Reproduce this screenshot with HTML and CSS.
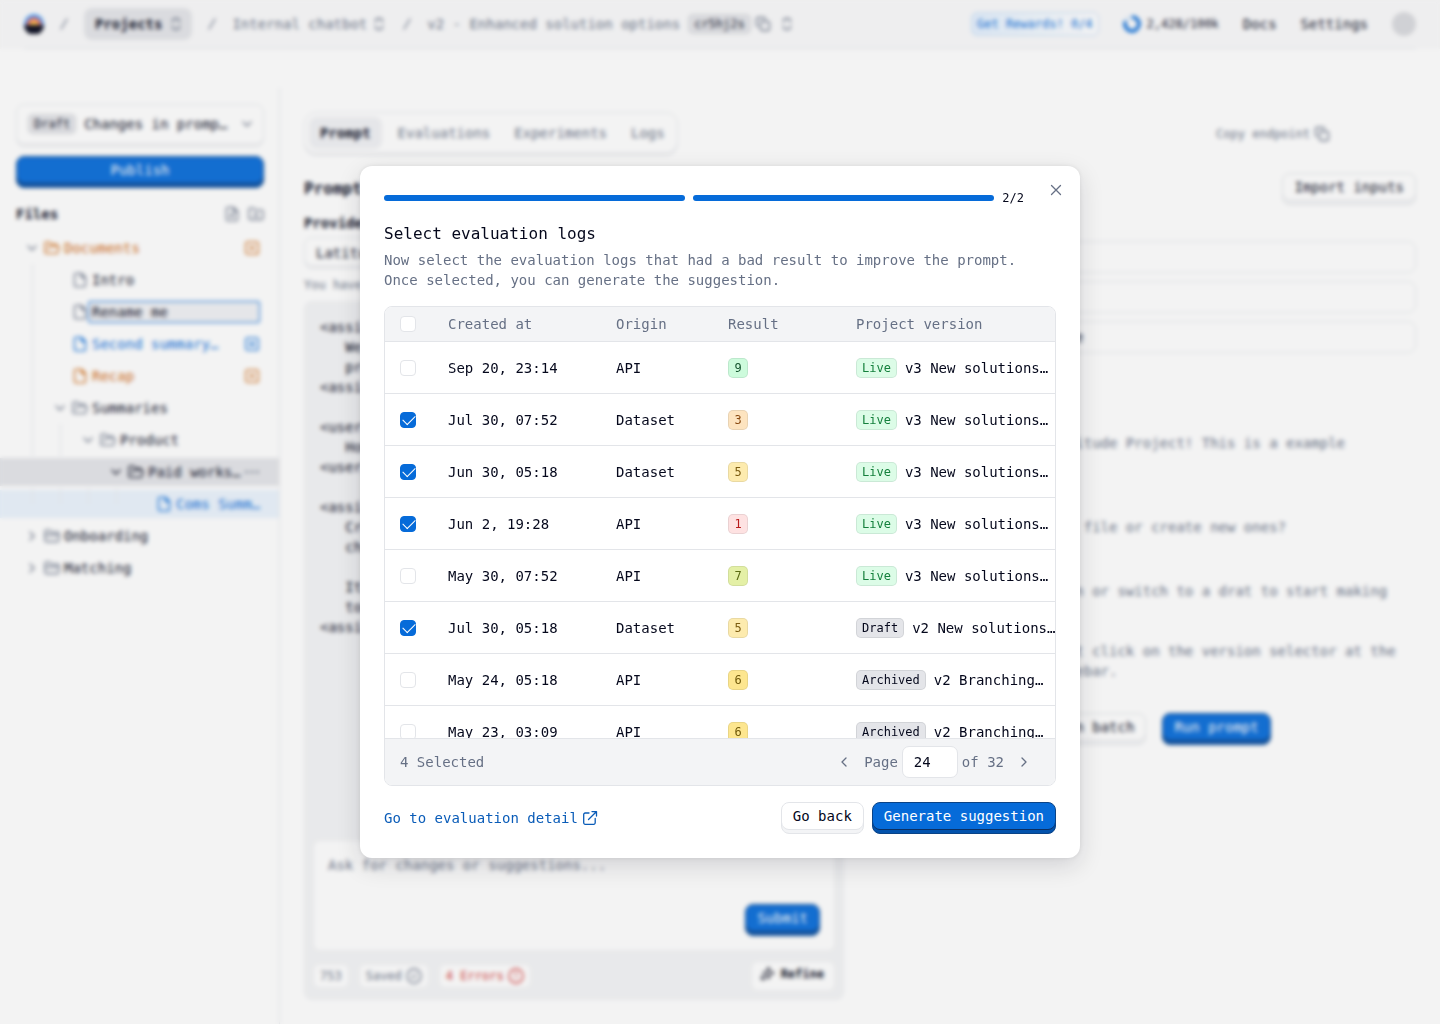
FILE: index.html
```html
<!DOCTYPE html>
<html lang="en">
<head>
    <meta charset="UTF-8">
    <meta name="viewport" content="width=device-width, initial-scale=1.0">
    <title>Select evaluation logs</title>
    <link rel="stylesheet" href="styles.css">
</head>
<body>
    <svg class="sprite" aria-hidden="true">
        <symbol id="updown" viewBox="0 0 16 16"><path d="M4.5 6V5a3.5 2.5 0 0 1 7 0v1M4.5 10v1a3.5 2.5 0 0 0 7 0v-1"/></symbol>
        <symbol id="slash" viewBox="0 0 16 16"><path d="M11 3 5 13"/></symbol>
        <symbol id="copy" viewBox="0 0 16 16"><rect x="5.5" y="5.5" width="9" height="9" rx="2"/><path d="M3 10.5A1.5 1.5 0 0 1 1.5 9V3A1.5 1.5 0 0 1 3 1.5h6A1.5 1.5 0 0 1 10.5 3"/></symbol>
        <symbol id="down" viewBox="0 0 16 16"><path d="m4 6 4 4 4-4"/></symbol>
        <symbol id="left" viewBox="0 0 16 16"><path d="m10 4-4 4 4 4"/></symbol>
        <symbol id="right" viewBox="0 0 16 16"><path d="m6 4 4 4-4 4"/></symbol>
        <symbol id="file" viewBox="0 0 16 16"><path d="M9.5 1.3H4a1.5 1.5 0 0 0-1.500 1.500v10.400A1.500 1.500 0 0 0 4 14.700h8a1.500 1.500 0 0 0 1.500-1.500V5.300zM9.300 1.500v4h4"/></symbol>
        <symbol id="file-plus" viewBox="0 0 16 16"><path d="M9.5 1.3H4a1.5 1.5 0 0 0-1.500 1.500v10.400A1.500 1.500 0 0 0 4 14.700h8a1.500 1.500 0 0 0 1.500-1.500V5.300zM9.300 1.500v4h4M8 7.500v4M6 9.500h4"/></symbol>
        <symbol id="folder" viewBox="0 0 16 16"><path d="M1 12V3.500A1.300 1.300 0 0 1 2.300 2.200H5.500L7 4.200h6.700A1.300 1.300 0 0 1 15 5.500V12a1.500 1.500 0 0 1-1.500 1.500h-11A1.500 1.500 0 0 1 1 12zM1 7h14"/></symbol>
        <symbol id="folder-plus" viewBox="0 0 16 16"><path d="M1 12V3.500A1.300 1.300 0 0 1 2.300 2.200H5.500L7 4.200h6.700A1.300 1.300 0 0 1 15 5.500V12a1.500 1.500 0 0 1-1.500 1.500h-11A1.500 1.500 0 0 1 1 12zM8 6.800v4M6 8.800h4"/></symbol>
        <symbol id="folder-open" viewBox="0 0 16 16"><path d="m4 9 1-2a1.300 1.300 0 0 1 1.200-.7h7.600a1.200 1.200 0 0 1 1.200 1.600l-1.200 4.500a1.300 1.300 0 0 1-1.300 1H2.500A1.400 1.400 0 0 1 1 12V3.500A1.300 1.300 0 0 1 2.300 2.200H5.500L7 4.200h5a1.300 1.300 0 0 1 1.300 1.300v.8"/></symbol>
        <symbol id="modified" viewBox="0 0 16 16"><rect x="1.800" y="1.800" width="12.400" height="12.400" rx="2"/><circle cx="8" cy="8" r="1.500"/></symbol>
        <symbol id="added" viewBox="0 0 16 16"><rect x="1.800" y="1.800" width="12.400" height="12.400" rx="2"/><path d="M8 5.300v5.400M5.300 8h5.400"/></symbol>
        <symbol id="dots" viewBox="0 0 16 16"><path d="M2.500 8h.1M8 8h.1M13.400 8h.1" stroke-width="2.500"/></symbol>
        <symbol id="check-circle" viewBox="0 0 16 16"><circle cx="8" cy="8" r="7"/><path d="m5.700 8 1.600 1.600 3-3"/></symbol>
        <symbol id="alert" viewBox="0 0 16 16"><circle cx="8" cy="8" r="7"/><path d="M8 4.800V8M8 10.800v.1"/></symbol>
        <symbol id="sparkles" viewBox="0 0 16 16"><path d="M9.500 1.500 11 5.500 15 7 11 8.500 9.500 12.500 8 8.500 4 7 8 5.500zM4 10v4M2 12h4"/></symbol>
        <symbol id="close" viewBox="0 0 16 16"><path d="m3.500 3.500 9 9M12.500 3.500l-9 9"/></symbol>
        <symbol id="external" viewBox="0 0 16 16"><path d="M13.200 8.500v4.300a1.500 1.500 0 0 1-1.500 1.500H3.200a1.500 1.500 0 0 1-1.500-1.500V4.500A1.500 1.500 0 0 1 3.200 3H7M10 1.600h4.500v4.500M14.300 1.800 6.500 9.500"/></symbol>
    </svg>

    <div class="app">
        <header class="topbar">
            <nav class="crumbs" aria-label="Breadcrumb">
                <svg class="logo" viewBox="0 0 20 20">
                    <circle cx="10" cy="10" r="10" fill="#4a9ff5"/>
                    <path d="M2.500 11a7.500 7.500 0 0 1 15 0z" fill="#f0525f"/>
                    <path d="M5 11a5 5 0 0 1 10 0z" fill="#ffc04a"/>
                    <path d="M0 11h20A10 10 0 0 1 0 11z" fill="#05081c"/>
                </svg>
                <svg class="icon muted"><use href="#slash"/></svg>
                <button class="crumb crumb-active">Projects <svg class="icon muted"><use href="#updown"/></svg></button>
                <svg class="icon muted"><use href="#slash"/></svg>
                <button class="crumb">Internal chatbot <svg class="icon"><use href="#updown"/></svg></button>
                <svg class="icon muted"><use href="#slash"/></svg>
                <button class="crumb">v2 - Enhanced solution options
                    <span class="badge badge-gray crumb-badge">cr5hj2s</span>
                    <svg class="icon"><use href="#copy"/></svg>
                    <svg class="icon crumb-more"><use href="#updown"/></svg>
                </button>
            </nav>
            <div class="topbar-right">
                <button class="rewards">Get Rewards! 0/4</button>
                <span class="usage">
                    <svg class="donut" viewBox="0 0 18 18"><circle cx="9" cy="9" r="7"/><path d="M9 2a7 7 0 1 1-6.500 4.400"/></svg>
                    2,428/100k
                </span>
                <a class="toplink" href="#">Docs</a>
                <a class="toplink" href="#">Settings</a>
                <span class="avatar"></span>
            </div>
        </header>

        <div class="body">
            <aside class="sidebar">
                <button class="version">
                    <span class="badge badge-gray">Draft</span>
                    <span class="version-name">Changes in promp…</span>
                    <svg class="icon muted"><use href="#down"/></svg>
                </button>
                <button class="btn btn-primary">Publish</button>
                <div class="files-head">
                    <h2 class="files-title">Files</h2>
                    <svg class="icon muted"><use href="#file-plus"/></svg>
                    <svg class="icon muted"><use href="#folder-plus"/></svg>
                </div>
                <ul class="tree">
                    <li class="node orange"><svg class="icon muted"><use href="#down"/></svg><svg class="icon"><use href="#folder-open"/></svg><span class="node-name">Documents</span><svg class="icon"><use href="#modified"/></svg></li>
                    <li class="node"><i class="indent"></i><i class="blank"></i><svg class="icon muted"><use href="#file"/></svg><span class="node-name">Intro</span></li>
                    <li class="node"><i class="indent"></i><i class="blank"></i><svg class="icon muted"><use href="#file"/></svg><input class="rename" type="text" value="Rename me" aria-label="File name"></li>
                    <li class="node blue"><i class="indent"></i><i class="blank"></i><svg class="icon"><use href="#file"/></svg><span class="node-name">Second summary…</span><svg class="icon"><use href="#added"/></svg></li>
                    <li class="node orange"><i class="indent"></i><i class="blank"></i><svg class="icon"><use href="#file"/></svg><span class="node-name">Recap</span><svg class="icon"><use href="#modified"/></svg></li>
                    <li class="node"><i class="indent"></i><svg class="icon muted"><use href="#down"/></svg><svg class="icon muted"><use href="#folder-open"/></svg><span class="node-name">Summaries</span></li>
                    <li class="node"><i class="indent"></i><i class="indent"></i><svg class="icon muted"><use href="#down"/></svg><svg class="icon muted"><use href="#folder-open"/></svg><span class="node-name">Product</span></li>
                    <li class="node node-hover"><i class="indent"></i><i class="indent"></i><i class="indent"></i><svg class="icon"><use href="#down"/></svg><svg class="icon"><use href="#folder-open"/></svg><span class="node-name">Paid works…</span><svg class="icon muted"><use href="#dots"/></svg></li>
                    <li class="node node-selected blue"><i class="indent"></i><i class="indent"></i><i class="indent"></i><i class="indent"></i><i class="blank"></i><svg class="icon"><use href="#file"/></svg><span class="node-name">Coms Summ…</span></li>
                    <li class="node"><svg class="icon muted"><use href="#right"/></svg><svg class="icon muted"><use href="#folder"/></svg><span class="node-name">Onboarding</span></li>
                    <li class="node"><svg class="icon muted"><use href="#right"/></svg><svg class="icon muted"><use href="#folder"/></svg><span class="node-name">Matching</span></li>
                </ul>
            </aside>

            <main class="main">
                <div class="main-head">
                    <div class="tabs">
                        <button class="tab tab-active">Prompt</button>
                        <button class="tab">Evaluations</button>
                        <button class="tab">Experiments</button>
                        <button class="tab">Logs</button>
                    </div>
                    <button class="copy-endpoint">Copy endpoint <svg class="icon"><use href="#copy"/></svg></button>
                </div>
                <div class="columns">
                    <section class="column">
                        <div class="column-head"><h1 class="heading">Prompt</h1></div>
                        <label class="label" for="provider">Provider</label>
                        <select class="select" id="provider"><option>Latitude</option></select>
                        <p class="help">You have 9</p>
                        <div class="editor">
<pre class="code">&lt;assistant&gt;
   We read
   prompts.
&lt;assistant/&gt;

&lt;user&gt;
   How?
&lt;user/&gt;

&lt;assistant&gt;
   Create
   chats.

   It has
   tools.
&lt;assistant/&gt;</pre>
                            <div class="ask">
                                <textarea class="ask-input" placeholder="Ask for changes or suggestions..." aria-label="Ask for changes"></textarea>
                                <button class="btn btn-primary ask-submit">Submit</button>
                            </div>
                            <div class="editor-foot">
                                <span class="chip">753</span>
                                <span class="chip">Saved <svg class="icon"><use href="#check-circle"/></svg></span>
                                <span class="chip chip-red">4 Errors <svg class="icon"><use href="#alert"/></svg></span>
                                <button class="refine"><svg class="icon"><use href="#sparkles"/></svg> Refine</button>
                            </div>
                        </div>
                    </section>
                    <section class="column">
                        <div class="column-head column-head-end">
                            <button class="btn btn-outline">Import inputs</button>
                        </div>
                        <div class="fields">
                            <input class="field-input" type="text" aria-label="Name">
                            <input class="field-input" type="text" aria-label="Question">
                            <input class="field-input" type="text" aria-label="Company" value="Latitude">
                        </div>
                        <div class="messages">
                            <p class="message message-tall">Latitude Project! This is a example</p>
                            <p class="message">any file or create new ones?</p>
                            <div class="message">
                                <p class="message-tall">plan or switch to a drat to start making</p>
                                <p>Just click on the version selector at the<br>sidebar.</p>
                            </div>
                        </div>
                        <div class="run-actions">
                            <button class="btn btn-outline">Run in batch</button>
                            <button class="btn btn-primary">Run prompt</button>
                        </div>
                    </section>
                </div>
            </main>
        </div>
    </div>

    <div class="overlay">
        <div class="dialog" role="dialog" aria-modal="true" aria-labelledby="dialog-title">
            <button class="close" aria-label="Close"><svg class="icon"><use href="#close"/></svg></button>
            <div class="steps">
                <span class="step"></span>
                <span class="step"></span>
                <span class="step-count">2/2</span>
            </div>
            <div class="intro">
                <h2 class="title" id="dialog-title">Select evaluation logs</h2>
                <p class="description">Now select the evaluation logs that had a bad result to improve the prompt. Once selected, you can generate the suggestion.</p>
            </div>

            <div class="logs">
                <div class="logs-scroll">
                    <table class="table">
                        <colgroup>
                            <col class="col-check"><col class="col-date"><col class="col-origin"><col class="col-result"><col>
                        </colgroup>
                        <thead>
                            <tr>
                                <th><input class="check" type="checkbox" aria-label="Select all"></th>
                                <th>Created at</th>
                                <th>Origin</th>
                                <th>Result</th>
                                <th>Project version</th>
                            </tr>
                        </thead>
                        <tbody>
                            <tr>
                                <td><input class="check" type="checkbox" aria-label="Select log"></td>
                                <td>Sep 20, 23:14</td>
                                <td>API</td>
                                <td><span class="badge score-9">9</span></td>
                                <td><span class="project"><span class="badge badge-green">Live</span> v3 New solutions…</span></td>
                            </tr>
                            <tr>
                                <td><input class="check" type="checkbox" aria-label="Select log" checked></td>
                                <td>Jul 30, 07:52</td>
                                <td>Dataset</td>
                                <td><span class="badge score-3">3</span></td>
                                <td><span class="project"><span class="badge badge-green">Live</span> v3 New solutions…</span></td>
                            </tr>
                            <tr>
                                <td><input class="check" type="checkbox" aria-label="Select log" checked></td>
                                <td>Jun 30, 05:18</td>
                                <td>Dataset</td>
                                <td><span class="badge score-5">5</span></td>
                                <td><span class="project"><span class="badge badge-green">Live</span> v3 New solutions…</span></td>
                            </tr>
                            <tr>
                                <td><input class="check" type="checkbox" aria-label="Select log" checked></td>
                                <td>Jun 2, 19:28</td>
                                <td>API</td>
                                <td><span class="badge score-1">1</span></td>
                                <td><span class="project"><span class="badge badge-green">Live</span> v3 New solutions…</span></td>
                            </tr>
                            <tr>
                                <td><input class="check" type="checkbox" aria-label="Select log"></td>
                                <td>May 30, 07:52</td>
                                <td>API</td>
                                <td><span class="badge score-7">7</span></td>
                                <td><span class="project"><span class="badge badge-green">Live</span> v3 New solutions…</span></td>
                            </tr>
                            <tr>
                                <td><input class="check" type="checkbox" aria-label="Select log" checked></td>
                                <td>Jul 30, 05:18</td>
                                <td>Dataset</td>
                                <td><span class="badge score-5">5</span></td>
                                <td><span class="project"><span class="badge badge-gray">Draft</span> v2 New solutions…</span></td>
                            </tr>
                            <tr>
                                <td><input class="check" type="checkbox" aria-label="Select log"></td>
                                <td>May 24, 05:18</td>
                                <td>API</td>
                                <td><span class="badge score-6">6</span></td>
                                <td><span class="project"><span class="badge badge-gray">Archived</span> v2 Branching…</span></td>
                            </tr>
                            <tr>
                                <td><input class="check" type="checkbox" aria-label="Select log"></td>
                                <td>May 23, 03:09</td>
                                <td>API</td>
                                <td><span class="badge score-6">6</span></td>
                                <td><span class="project"><span class="badge badge-gray">Archived</span> v2 Branching…</span></td>
                            </tr>
                        </tbody>
                    </table>
                </div>
                <div class="logs-foot">
                    <span>4 Selected</span>
                    <div class="pager">
                        <button class="page-btn" aria-label="Previous page"><svg class="icon"><use href="#left"/></svg></button>
                        <div class="page-now">
                            <label for="page">Page</label>
                            <input class="page-input" id="page" type="text" value="24">
                            <span>of 32</span>
                        </div>
                        <button class="page-btn" aria-label="Next page"><svg class="icon"><use href="#right"/></svg></button>
                    </div>
                </div>
            </div>

            <div class="actions">
                <a class="detail-link" href="#">Go to evaluation detail <svg class="icon"><use href="#external"/></svg></a>
                <button class="btn btn-outline">Go back</button>
                <button class="btn btn-primary">Generate suggestion</button>
            </div>
        </div>
    </div>
</body>
</html>
```

FILE: styles.css
```css
* {
    box-sizing: border-box;
}
body {
    margin: 0;
    background: #fff;
    color: #05081c;
    font: 14px/20px "DejaVu Sans Mono", monospace;
}
h1, h2, p, ul, pre {
    margin: 0;
    padding: 0;
}
button, input, select, textarea {
    font: inherit;
    color: inherit;
}
button {
    display: inline-flex;
    align-items: center;
    padding: 0;
    border: 0;
    background: none;
    white-space: nowrap;
    cursor: pointer;
}
a {
    color: inherit;
    text-decoration: none;
}
.sprite {
    display: none;
}
.icon {
    flex: none;
    width: 16px;
    height: 16px;
    fill: none;
    stroke: currentColor;
    stroke-width: 1.3;
    stroke-linecap: round;
    stroke-linejoin: round;
}
.icon.muted {
    color: #667085;
}

/* badges */
.badge {
    display: inline-flex;
    flex: none;
    align-items: center;
    justify-content: center;
    min-width: 20px;
    height: 20px;
    padding: 0 5px;
    border: 1px solid rgba(5, 8, 28, .08);
    border-radius: 5px;
    font-size: 12px;
    line-height: 16px;
}
.badge-gray { background: #e4e5e9; }
.badge-green { background: #dcfce7; color: #15803d; }
.score-9 { background: #cdfbdc; color: #14532d; }
.score-7 { background: #e4f0a6; color: #5a6b12; }
.score-6 { background: #fde68f; color: #715a0a; }
.score-5 { background: #fdebae; color: #7c5c10; }
.score-3 { background: #fde4c0; color: #8a4b12; }
.score-1 { background: #fee2e2; color: #b91c1c; }

/* buttons */
.btn {
    justify-content: center;
    height: 32px;
    padding: 0 11px 4px;
    border: 1px solid #e3e5e9;
    border-radius: 8px;
}
.btn-outline {
    background: #fff;
    box-shadow: inset 0 -3px 0 #f3f4f6, inset 0 -4px 0 #e3e5e9;
}
.btn-primary {
    border-color: #0a4387;
    background: #066bd9;
    box-shadow: inset 0 -3px 0 #0352ac, inset 0 -4px 0 #0a2f63;
    color: #fff;
}

/* top bar */
.app {
    display: flex;
    flex-direction: column;
    min-height: 100vh;
}
.topbar {
    display: flex;
    align-items: center;
    justify-content: space-between;
    height: 49px;
    padding: 0 24px 1px;
    background: linear-gradient(#e9ebee, #e9ebee) 50% 100% / calc(100% - 48px) 1px no-repeat #fafafb;
}
.crumbs {
    display: flex;
    align-items: center;
    gap: 12px;
    color: #667085;
}
.logo {
    width: 20px;
    height: 20px;
}
.crumb {
    gap: 4px;
}
.crumb-active {
    height: 32px;
    padding: 0 8px 0 11px;
    gap: 6px;
    border-radius: 8px;
    background: #e4e5e9;
    color: #05081c;
    font-weight: bold;
}
.crumb-badge {
    margin-left: 4px;
    color: #05081c;
}
.crumb-more {
    margin-left: 4px;
}
.topbar-right {
    display: flex;
    align-items: center;
    gap: 24px;
}
.rewards {
    height: 24px;
    padding: 0 5px;
    border: 1px solid #c3dcf6;
    border-radius: 6px;
    background: linear-gradient(90deg, #e3f0fe, #fff);
    color: #066bd9;
    font-size: 12px;
}
.usage {
    display: flex;
    align-items: center;
    gap: 6px;
    font-size: 12px;
}
.donut {
    width: 18px;
    height: 18px;
    fill: none;
    stroke: #d9e8f8;
    stroke-width: 3.5;
}
.donut path {
    stroke: #066bd9;
}
.avatar {
    width: 24px;
    height: 24px;
    border-radius: 50%;
    background: #d9dade;
}

/* sidebar */
.body {
    display: flex;
    flex: 1;
    padding-top: 39px;
}
.sidebar {
    display: flex;
    flex: none;
    flex-direction: column;
    width: 280px;
    padding: 16px 0;
    border-right: 1px solid #e9ebee;
}
.version {
    gap: 8px;
    height: 43px;
    margin: 0 15px 9px 16px;
    padding: 0 8px 4px 11px;
    border: 1px solid #e9ebee;
    border-radius: 8px;
    box-shadow: inset 0 -3px 0 #f0f1f4;
}
.version-name {
    flex: 1;
    text-align: left;
}
.sidebar .btn {
    margin: 0 15px 0 16px;
}
.files-head {
    display: flex;
    align-items: center;
    gap: 8px;
    margin: 16px 15px 8px 16px;
}
.files-title {
    flex: 1;
    font-size: 14px;
}
.tree {
    display: flex;
    flex-direction: column;
    gap: 4px;
    padding-top: 2px;
    list-style: none;
}
.node {
    display: flex;
    align-items: center;
    gap: 4px;
    height: 28px;
    padding: 0 19px 0 24px;
}
.node-name {
    flex: 1;
    min-width: 0;
    white-space: nowrap;
}
.indent {
    flex: none;
    align-self: stretch;
    width: 24px;
    margin: -2px 0;
    background: linear-gradient(#e9ebee, #e9ebee) 8px 0 / 1px 100% no-repeat;
}
.blank {
    flex: none;
    width: 16px;
}
.orange { color: #d0670f; }
.blue { color: #066bd9; }
.node-hover { background: #e4e5e9; }
.node-selected { background: #eaf3fd; }
.node-hover .indent { background: none; }
.node-selected .indent { background-size: 1px 50%; }
.rename {
    flex: 1;
    min-width: 0;
    height: 22px;
    margin-left: -4px;
    padding: 0 3px;
    border: 1px solid #066bd9;
    border-radius: 2px;
    background: #f0f1f4;
}

/* main area */
.main {
    display: flex;
    flex: 1;
    flex-direction: column;
    gap: 17px;
    min-width: 0;
    padding: 24px;
}
.main-head {
    display: flex;
    align-items: center;
    justify-content: space-between;
}
.tabs {
    display: flex;
    height: 44px;
    padding: 4px 0 6px 4px;
    border: 1px solid #e9ebee;
    border-radius: 12px;
    box-shadow: inset 0 -3px 0 #f0f1f4;
}
.tab {
    padding: 0 12px;
    border-radius: 8px;
    color: #667085;
}
.tab-active {
    margin-right: 4px;
    padding: 0 11px;
    background: #f0f1f4;
    color: #05081c;
    font-weight: bold;
}
.copy-endpoint {
    gap: 4px;
    margin-right: 86px;
    color: #667085;
    font-size: 12px;
}
.columns {
    display: flex;
    flex: 1;
    gap: 32px;
}
.column {
    display: flex;
    flex: 1;
    flex-direction: column;
    min-width: 0;
}
.column-head {
    display: flex;
    align-items: center;
    height: 32px;
    margin-bottom: 8px;
}
.column-head-end {
    justify-content: flex-end;
}
.heading {
    font-size: 16px;
    line-height: 24px;
}
.label {
    font-weight: bold;
}
.select {
    align-self: flex-start;
    width: 160px;
    height: 32px;
    margin: 4px 0 8px;
    padding: 0 7px;
    border: 1px solid #e9ebee;
    border-radius: 8px;
    background: #fff;
    box-shadow: inset 0 -3px 0 #f0f1f4;
}
.help {
    margin-bottom: 8px;
    color: #667085;
    font-size: 12px;
    line-height: 16px;
}
.editor {
    display: flex;
    flex: 1;
    flex-direction: column;
    padding: 16px 10px 10px;
    border-radius: 8px;
    background: #f3f4f6;
}
.code {
    flex: 1;
    padding-left: 6px;
    font: inherit;
}
.ask {
    display: flex;
    flex-direction: column;
    height: 109px;
    padding: 14px;
    border-radius: 6px;
    background: #fff;
}
.ask-input {
    flex: 1;
    padding: 0;
    border: 0;
    resize: none;
    background: none;
}
.ask-input::placeholder {
    color: #667085;
}
.ask-submit {
    align-self: flex-end;
}
.editor-foot {
    display: flex;
    align-items: center;
    gap: 12px;
    height: 28px;
    margin-top: 12px;
    font-size: 12px;
}
.chip {
    display: flex;
    align-items: center;
    gap: 4px;
    height: 22px;
    padding: 0 6px;
    border-radius: 5px;
    background: #fff;
    color: #667085;
}
.chip-red {
    color: #cf2f2f;
}
.refine {
    gap: 6px;
    height: 28px;
    margin-left: auto;
    padding: 0 10px 4px 7px;
    border-radius: 6px;
    background: #fff;
    font-weight: bold;
}

.fields {
    display: flex;
    flex-direction: column;
    gap: 8px;
    margin: 28px 0 0 128px;
}
.field-input {
    height: 32px;
    padding: 0 11px;
    border: 1px solid #e9ebee;
    border-radius: 8px;
}
.messages {
    display: flex;
    flex-direction: column;
    gap: 44px;
    margin-top: 80px;
    padding-left: 174px;
    color: #667085;
    white-space: nowrap;
}
.message-tall {
    min-height: 40px;
}
.message p + p {
    margin-top: 20px;
}
.run-actions {
    display: flex;
    justify-content: center;
    gap: 16px;
    margin-top: 32px;
}

/* dialog */
.overlay {
    position: fixed;
    inset: 0;
    display: flex;
    align-items: center;
    justify-content: center;
    background: rgba(135, 135, 135, .1);
    backdrop-filter: blur(2px);
}
.dialog {
    position: relative;
    display: flex;
    flex-direction: column;
    gap: 16px;
    width: 100%;
    max-width: 720px;
    padding: 24px;
    border-radius: 12px;
    background: #fff;
    box-shadow: 0 8px 24px rgba(5, 8, 28, .14), 0 0 4px rgba(5, 8, 28, .08);
}
.close {
    position: absolute;
    top: 16px;
    right: 16px;
    color: #667085;
}
.steps {
    display: flex;
    align-items: center;
    gap: 8px;
    padding-right: 32px;
}
.step {
    flex: 1;
    height: 6px;
    border-radius: 3px;
    background: #066bd9;
}
.step-count {
    font-size: 12px;
    line-height: 16px;
}
.title {
    margin-bottom: 4px;
    font-size: 16px;
    font-weight: normal;
    line-height: 24px;
}
.description {
    max-width: 640px;
    color: #667085;
}
.logs {
    overflow: hidden;
    border: 1px solid #e3e5e9;
    border-radius: 8px;
}
.logs-scroll {
    height: 431px;
    overflow: hidden;
}
.table {
    width: 100%;
    table-layout: fixed;
    border-collapse: separate;
    border-spacing: 0;
}
.col-check { width: 47px; }
.col-date { width: 168px; }
.col-origin { width: 112px; }
.col-result { width: 128px; }
.table th,
.table td {
    height: 52px;
    padding: 0 0 0 16px;
    border-bottom: 1px solid #e3e5e9;
    text-align: left;
    vertical-align: middle;
    white-space: nowrap;
}
.table th {
    height: 35px;
    background: #f3f4f6;
    color: #667085;
    font-weight: normal;
}
.table th:first-child,
.table td:first-child {
    padding-left: 15px;
}
.table .badge {
    vertical-align: middle;
}
.project {
    display: flex;
    align-items: center;
    gap: 8px;
    overflow: hidden;
}
.check {
    display: block;
    width: 16px;
    height: 16px;
    margin: 0;
    border: 1px solid #e3e5e9;
    border-radius: 4px;
    appearance: none;
    background: #fff;
}
.check:checked {
    border-color: #066bd9;
    background: #066bd9;
}
.check:checked::after {
    content: "";
    display: block;
    width: 11px;
    height: 6px;
    margin: 2px 0 0 2px;
    border: solid #fff;
    border-width: 0 0 1px 1px;
    transform: rotate(-45deg);
}
.logs-foot {
    display: flex;
    align-items: center;
    justify-content: space-between;
    height: 47px;
    padding: 0 23px 0 15px;
    border-top: 1px solid #e3e5e9;
    background: #f3f4f6;
    color: #667085;
}
.pager {
    display: flex;
    align-items: center;
    gap: 12px;
}
.page-now {
    display: flex;
    align-items: center;
    gap: 4px;
}
.page-input {
    width: 56px;
    height: 32px;
    padding: 0 11px;
    border: 1px solid #e3e5e9;
    border-radius: 7px;
    background: #fff;
    color: #05081c;
}
.actions {
    display: flex;
    align-items: center;
    gap: 8px;
}
.detail-link {
    display: flex;
    align-items: center;
    gap: 4px;
    margin-right: auto;
    color: #0a5cb8;
}
```
